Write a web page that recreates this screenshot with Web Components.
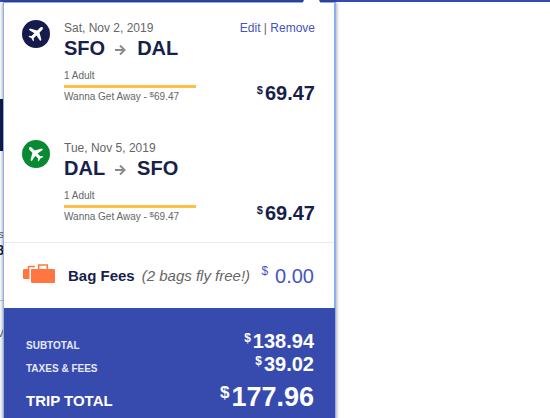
<!DOCTYPE html>
<html lang="en">
<head>
<meta charset="utf-8">
<title>Trip summary</title>
<style>
body{margin:0;background:#fff;color:#666;font-family:"Liberation Sans",Arial,sans-serif;font-size:12px}
</style>
</head>
<body>
<trip-page></trip-page>
<script>
const define = (name, html, setup) => {
  const template = document.createElement('template');
  template.innerHTML = html;
  customElements.define(name, class extends HTMLElement {
    constructor() {
      super();
      this.attachShadow({mode: 'open'}).append(template.content.cloneNode(true));
    }
    connectedCallback() { if (setup) setup(this, this.shadowRoot); }
  });
};

define('money-amount', `
<style>
:host{display:inline-flex;align-items:flex-start;font-weight:bold;font-size:20px;line-height:24px;color:#171f4a;white-space:nowrap}
.sign{font-size:11px;line-height:18px;margin-right:2px}
:host([kind=fee]){font-weight:normal;color:#4654c0}
:host([kind=fee]) .sign{font-size:12px;line-height:14px;margin-right:7px}
:host([kind=light]){color:#fff}
:host([kind=light]) .sign{font-size:12px}
:host([kind=total]){color:#fff;font-size:27px;line-height:32px}
:host([kind=total]) .sign{font-size:17px;line-height:24px}
</style><span class="sign">$</span><span><slot></slot></span>`);

define('flight-leg', `
<style>
:host{display:grid;grid-template-columns:28px 132px 1fr;column-gap:14px;padding:0 19px 0 18px;height:120px;box-sizing:border-box}
:host([direction=return]){height:102px}
.badge{width:28px;height:28px;border-radius:50%;background:#151c4b;display:block}
:host([direction=return]) .badge{background:#078a32}
:host([direction=return]) .plane{transform:rotate(-90deg);transform-origin:14px 14px}
.date{line-height:16px;font-size:12px;white-space:nowrap}
.route{display:flex;align-items:center;gap:10px;font:bold 20px/24px "Liberation Sans",Arial,sans-serif;color:#171f4a}
.city{min-width:41px}
.arrow{width:12px;height:12px;flex:none;margin-top:4px}
.adult,.fare{font-size:10px;line-height:14px;white-space:nowrap}
.adult{margin-top:9px;padding-bottom:2px;border-bottom:3px solid #ffbf45}
.fare{margin-top:2px}
sup{font-size:8px;line-height:0;vertical-align:3px}
.side{display:flex;flex-direction:column;align-items:flex-end;justify-content:space-between;height:85px}
</style>
<svg class="badge" viewBox="0 0 28 28" aria-hidden="true"><path class="plane" fill="#fff" d="M20.6 7.3c.7.7.2 1.9-.7 2.9l-2.4 2.4 1.9 7.2-1.2 1.2-3.7-5.5-2.8 2.8.3 2.1-.9.9-1.6-3-3-1.6.9-.9 2.1.3 2.8-2.8-5.5-3.6L8 8.5l7.2 1.9 2.5-2.5c.9-.9 2.2-1.3 2.9-.6z"/></svg>
<div>
 <div class="date"></div>
 <div class="route"><span class="city from"></span><svg class="arrow" viewBox="0 0 12 12" fill="none" stroke="#8a8a8a" stroke-width="2" role="img" aria-label="to"><path d="M0 6h10M5 1.500l4.500 4.500L5 10.500"/></svg><span class="city to"></span></div>
 <div class="adult">1 Adult</div>
 <div class="fare">Wanna Get Away - <sup>$</sup>69.47</div>
</div>
<div class="side"><span><slot></slot></span><money-amount>69.47</money-amount></div>`,
(el, root) => {
  for (const key of ['date', 'from', 'to']) root.querySelector('.' + key).textContent = el.getAttribute(key);
});

define('leg-actions', `
<style>
:host{display:block;font-size:12px;line-height:16px;white-space:nowrap}
a{color:#4654c0;text-decoration:none}
</style><a href="#edit">Edit</a> | <a href="#remove">Remove</a>`);

define('bag-fees', `
<style>
:host{display:flex;align-items:center;height:65px;border-top:1px solid #ececec;padding:0 20px 0 19px;white-space:nowrap}
svg{width:32px;height:20px;flex:none;margin-right:13px;margin-bottom:4px}
b{font-size:15px;color:#171f4a}
i{font-size:15px;margin-left:7px}
money-amount{margin-left:auto}
</style>
<svg viewBox="0 0 32 20" aria-hidden="true" fill="#ff7641"><path d="M1 5h5.500v10H1q-1 0-1-1V6q0-1 1-1z"/><path d="M5.500 5V2.500H12" fill="none" stroke="#ff7641" stroke-width="1.500"/><path d="M9 5h22q1 0 1 1v12q0 1-1 1H9q-1 0-1-1V6q0-1 1-1z"/><path d="M15.700 5V1h8.600v4" fill="none" stroke="#ff7641" stroke-width="1.600"/></svg>
<b>Bag Fees</b><i>(2 bags fly free!)</i><money-amount kind="fee">0.00</money-amount>`);

define('price-totals', `
<style>
:host{display:block;background:#374baf;color:#fff;padding:21px 21px 9px 22px;margin-right:-1px}
dl{margin:0}
div{display:flex;justify-content:space-between;align-items:flex-start;height:23px}
dt{font-weight:bold;font-size:10px;line-height:16px;padding-top:9px;color:#e5e8fa}
dd{margin:0}
.trip{height:36px;padding-top:6px}
.trip dt{font-size:15px;line-height:18px;padding-top:11px;color:#fff}
</style>
<dl>
<div><dt>SUBTOTAL</dt><dd><money-amount kind="light">138.94</money-amount></dd></div>
<div><dt>TAXES &amp; FEES</dt><dd><money-amount kind="light">39.02</money-amount></dd></div>
<div class="trip"><dt>TRIP TOTAL</dt><dd><money-amount kind="total">177.96</money-amount></dd></div>
</dl>`);

define('trip-summary', `
<style>
:host{display:block;box-sizing:border-box;background:#fff;border:1px solid #8bb0f0;border-right-width:2px;border-bottom:0;box-shadow:0 0 4px #0007;padding-top:17px}
.notch{position:absolute;top:-3px;right:13px;width:19px;height:4px;background:#fff;clip-path:polygon(2px 0,17px 0,100% 100%,0 100%)}
</style>
<span class="notch"></span>
<flight-leg date="Sat, Nov 2, 2019" from="SFO" to="DAL"><leg-actions></leg-actions></flight-leg>
<flight-leg direction="return" date="Tue, Nov 5, 2019" from="DAL" to="SFO"></flight-leg>
<bag-fees></bag-fees>
<price-totals></price-totals>`);

define('fare-backdrop', `
<style>
:host{display:block;max-width:336px}
.band{margin-top:97px;height:52px;background:#151c4b}
.edge{width:4px;overflow:hidden;display:flex;flex-direction:column;align-items:flex-end;padding-top:75px}
span{font-size:11px;line-height:16px}
.num{font-size:14px;font-weight:bold;color:#171f4a;padding-bottom:42px;border-bottom:1px solid #ccc;margin-bottom:24px}
</style>
<div class="band"></div>
<div class="edge" aria-hidden="true"><span>s</span><span class="num">8</span><span>V</span></div>`);

define('trip-page', `
<style>
:host{display:block;position:relative;min-height:100vh;overflow:hidden}
.bar{height:2px;background:#374baf}
trip-summary{position:absolute;top:2px;left:3px;width:333px;min-height:calc(100vh - 2px)}
</style>
<div class="bar"></div>
<fare-backdrop></fare-backdrop>
<trip-summary></trip-summary>`);
</script>
</body>
</html>
